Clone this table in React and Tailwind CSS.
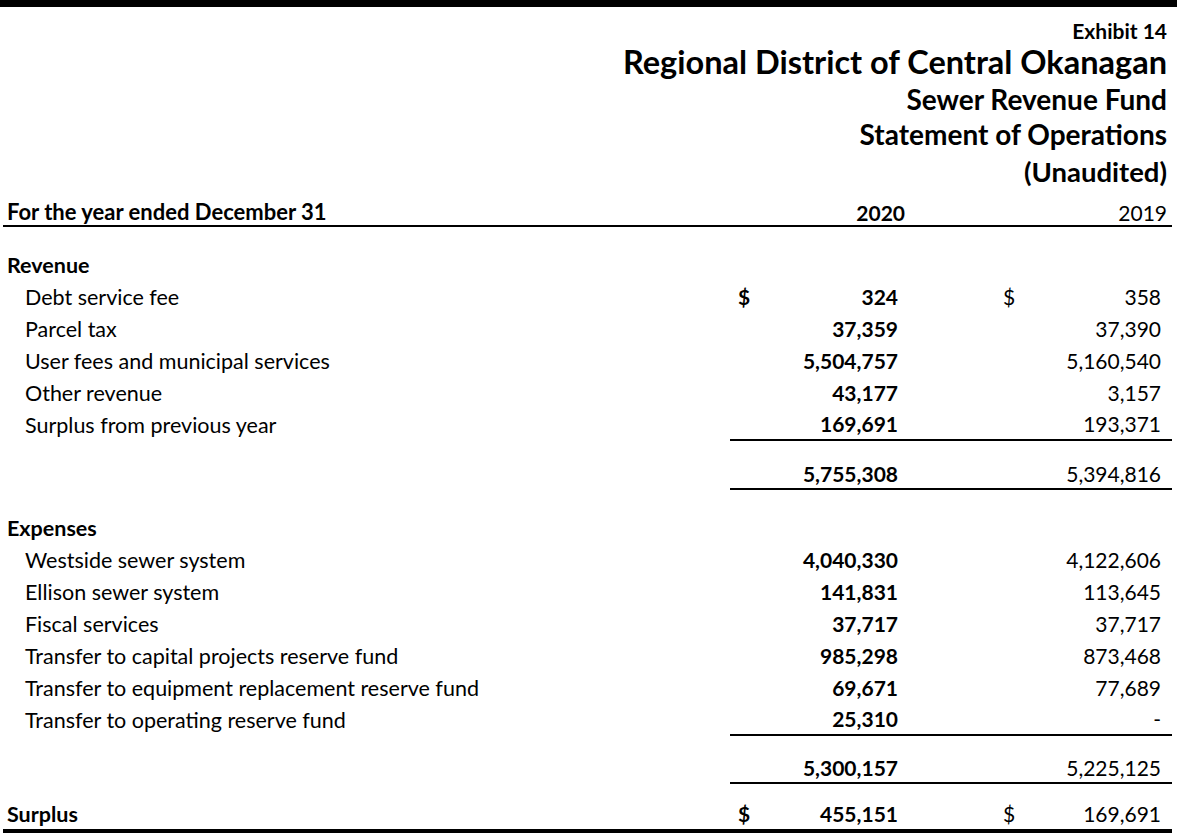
const revenue = [
  { label: 'Debt service fee', a: '324', b: '358', dollar: true },
  { label: 'Parcel tax', a: '37,359', b: '37,390' },
  { label: 'User fees and municipal services', a: '5,504,757', b: '5,160,540' },
  { label: 'Other revenue', a: '43,177', b: '3,157' },
  { label: 'Surplus from previous year', a: '169,691', b: '193,371', rule: true },
];

const expenses = [
  { label: 'Westside sewer system', a: '4,040,330', b: '4,122,606' },
  { label: 'Ellison sewer system', a: '141,831', b: '113,645' },
  { label: 'Fiscal services', a: '37,717', b: '37,717' },
  { label: 'Transfer to capital projects reserve fund', a: '985,298', b: '873,468' },
  { label: 'Transfer to equipment replacement reserve fund', a: '69,671', b: '77,689' },
  { label: 'Transfer to operating reserve fund', a: '25,310', b: '-', rule: true },
];

function Cols({ a, b, dollar, rule }) {
  const line = rule ? 'border-b-2 border-black' : '';
  return (
    <div className={`flex self-stretch text-[21px] pb-[2px] ${line}`}>
      <div className="w-[175px] flex items-center justify-between pl-[8px] pr-[7px] font-bold">
        <span>{dollar ? '$' : ''}</span>
        <span>{a}</span>
      </div>
      <div className="w-[267px] flex items-center justify-between pl-[98px] pr-[11px]">
        <span>{dollar ? '$' : ''}</span>
        <span>{b}</span>
      </div>
    </div>
  );
}

function Row({ label, ...rest }) {
  return (
    <div className="flex h-[32px] items-stretch">
      <div className="flex-1 flex items-center pl-[22px] pt-[2px] text-[21.5px]">{label}</div>
      <Cols {...rest} />
    </div>
  );
}

export default function App() {
  return (
    <div className="w-[1177px] h-[840px] bg-white text-black text-[21px] leading-none" style={{ fontFamily: 'Lato, "Open Sans", sans-serif' }}>
      <div className="h-[7px] bg-black" />

      {/* Heading */}
      <div className="pr-[10px] flex flex-col items-end font-bold pt-[11px]">
        <div className="h-[24px] flex items-center text-[21px]">Exhibit 14</div>
        <div className="h-[40px] flex items-center text-[32.5px]">Regional District of Central Okanagan</div>
        <div className="h-[33px] flex items-center text-[28px]">Sewer Revenue Fund</div>
        <div className="h-[37px] flex items-center text-[28px]">Statement of Operations</div>
        <div className="h-[41px] flex items-center text-[27.5px] pb-[2px]">(Unaudited)</div>
      </div>

      <div className="px-[3px] pr-[5px]">
        <div className="flex h-[34px] pt-[6px] items-center border-b-2 border-black">
          <div className="flex-1 pl-[4px] font-bold text-[22px]">For the year ended December 31</div>
          <div className="w-[175px] text-right font-bold">2020</div>
          <div className="w-[267px] text-right pr-[5px]">2019</div>
        </div>

        <div className="h-[22px]" />
        <div className="h-[32px] flex items-center pl-[4px] pt-[2px] font-bold text-[21.5px]">Revenue</div>
        {revenue.map((r) => (
          <Row key={r.label} {...r} />
        ))}

        <div className="h-[19px]" />
        <div className="flex h-[30px]">
          <div className="flex-1" />
          <Cols a="5,755,308" b="5,394,816" rule />
        </div>

        <div className="h-[22px]" />
        <div className="h-[32px] flex items-center pl-[4px] pt-[2px] font-bold text-[21.5px]">Expenses</div>
        {expenses.map((r) => (
          <Row key={r.label} {...r} />
        ))}

        <div className="h-[19px]" />
        <div className="flex h-[29px]">
          <div className="flex-1" />
          <Cols a="5,300,157" b="5,225,125" rule />
        </div>

        <div className="h-[15px]" />
        <div className="flex h-[34px] border-b-4 border-black">
          <div className="flex-1 flex items-center pl-[4px] pt-[2px] font-bold text-[21.5px]">Surplus</div>
          <Cols a="455,151" b="169,691" dollar />
        </div>
      </div>
    </div>
  );
}
